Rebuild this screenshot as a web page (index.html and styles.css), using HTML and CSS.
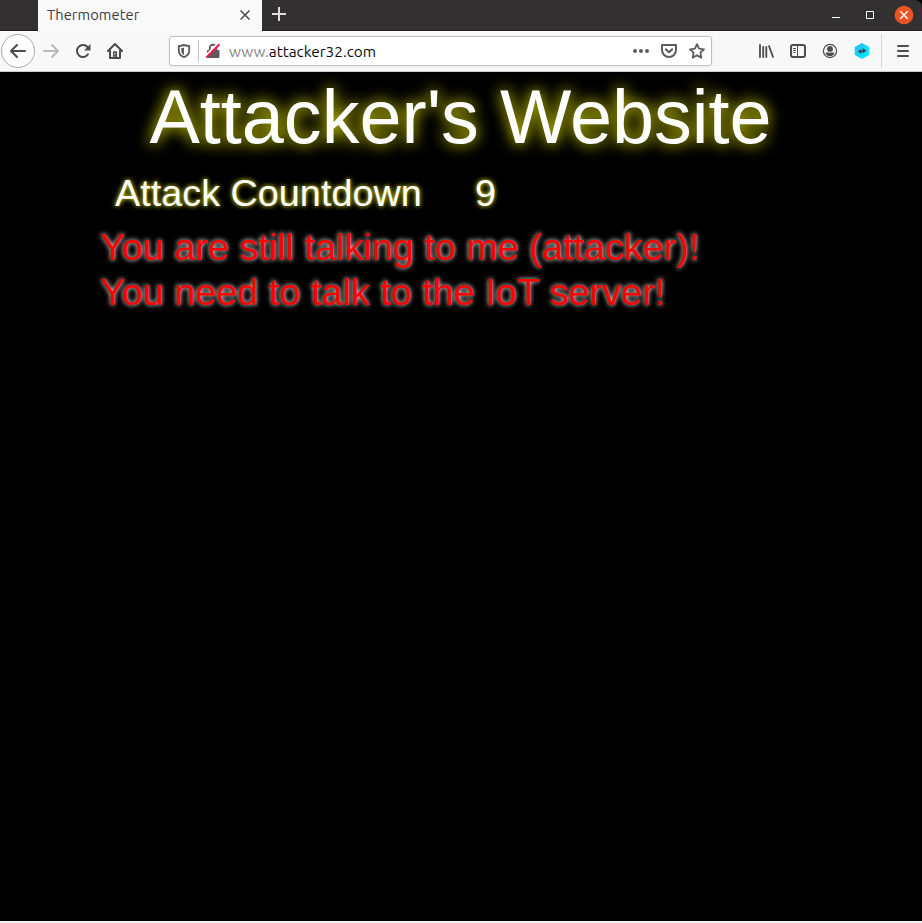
FILE: index.html
```html
<!DOCTYPE html>
<html lang="en">
<head>
<meta charset="utf-8">
<title>Thermometer</title>
<link rel="stylesheet" href="styles.css">
</head>
<body>
<div class="window">
  <header class="tabbar">
    <div class="tab">
      <span class="tab-title">Thermometer</span>
      <svg class="tab-close" width="16" height="16" viewBox="0 0 16 16"><path d="M3.500 3.500l9 9M12.500 3.500l-9 9" stroke="#4c4c4e" stroke-width="1.500"/></svg>
    </div>
    <svg class="new-tab" width="16" height="16" viewBox="0 0 16 16"><path d="M8 1v14M1 8h14" stroke="#dedede" stroke-width="2"/></svg>
    <div class="controls">
      <svg width="16" height="16" viewBox="0 0 16 16"><path d="M4 10.500h8" stroke="#fff"/></svg>
      <svg width="16" height="16" viewBox="0 0 16 16"><path d="M4.500 4.500h7v7h-7z" fill="none" stroke="#fff"/></svg>
      <svg width="20" height="20" viewBox="0 0 20 20"><circle cx="10" cy="10" r="9.300" fill="#e95420"/><path d="M6.300 6.300l7.400 7.400M13.700 6.300l-7.400 7.400" stroke="#fff" stroke-width="1.400"/></svg>
    </div>
  </header>
  <nav class="toolbar">
    <div class="nav-buttons">
      <span class="back"><svg width="16" height="16" viewBox="0 0 16 16" fill="none" stroke="#4c4c4e" stroke-width="2" stroke-linecap="round" stroke-linejoin="round"><path d="M15 8H1M7 2L1 8l6 6"/></svg></span>
      <svg width="16" height="16" viewBox="0 0 16 16" fill="none" stroke="#b9b9b9" stroke-width="2" stroke-linecap="round" stroke-linejoin="round"><path d="M1 8h14M9 2l6 6-6 6"/></svg>
      <svg width="16" height="16" viewBox="0 0 16 16"><path d="M12.500 4A6 6 0 1 0 13 11.300" fill="none" stroke="#4c4c4e" stroke-width="2" stroke-linecap="round"/><path d="M15.500 1v6.500H9z" fill="#4c4c4e"/></svg>
      <svg width="16" height="16" viewBox="0 0 16 16" fill="none" stroke="#4c4c4e" stroke-width="2" stroke-linecap="round" stroke-linejoin="round"><path d="M1 8l7-7 7 7M3 7.500V15h10V7.500"/><path d="M6.700 14.500V9h2.600v5.500M8.500 12v1" stroke-width="1.500"/></svg>
    </div>
    <div class="urlbar">
      <svg class="shield" width="16" height="16" viewBox="0 0 16 16"><path d="M8 2C5.800 2.800 4 3 2.800 3v4.500c0 3.500 2 5.500 5.200 6.700 3.200-1.200 5.200-3.200 5.200-6.700V3C12 3 10.200 2.800 8 2z" fill="none" stroke="#5d5d5f" stroke-width="1.900" stroke-linejoin="round"/><path d="M8 4.500C7 5 6 5 5.300 5v3c0 1.900 1 3 2.700 3.900z" fill="#5d5d5f"/></svg>
      <span class="url-divider"></span>
      <svg class="lock" width="16" height="16" viewBox="0 0 16 16"><path d="M4.700 7V5a3.300 3.300 0 0 1 6.600 0v2" fill="none" stroke="#5d5d5f" stroke-width="1.900"/><rect x="2" y="7" width="12.500" height="8" rx="1" fill="#5d5d5f"/><path d="M.7 13.500L13.300 1" stroke="#fff" stroke-width="3"/><path d="M1.200 14.600L14.500 1.300" stroke="#ff1048" stroke-width="2"/></svg>
      <span class="address"><span class="sub">www.</span><span class="host">attacker32.com</span></span>
      <div class="page-actions">
        <svg width="16" height="16" viewBox="0 0 16 16" fill="#5d5d5f"><circle cx="2" cy="8" r="2"/><circle cx="8" cy="8" r="2"/><circle cx="14" cy="8" r="2"/></svg>
        <svg width="16" height="16" viewBox="0 0 16 16" fill="none" stroke="#5d5d5f" stroke-width="2" stroke-linecap="round" stroke-linejoin="round"><path d="M1 2h14v5A7 7 0 0 1 1 7z"/><path d="M4.800 6.200L8 9.300l3.200-3.100"/></svg>
        <svg width="16" height="16" viewBox="0 0 16 16"><path d="M8 1.200l2.100 4.500 4.900.6-3.600 3.400.9 4.900L8 12.200l-4.300 2.400.9-4.900L1 6.300l4.900-.6z" fill="none" stroke="#5d5d5f" stroke-width="1.800" stroke-linejoin="round"/></svg>
      </div>
    </div>
    <div class="tools">
      <svg width="16" height="16" viewBox="0 0 16 16" fill="none" stroke="#4c4c4e" stroke-width="1.800" stroke-linecap="round"><path d="M2 2v12M5.200 4v10M8.300 4v10M11 3l4 11"/></svg>
      <svg width="16" height="16" viewBox="0 0 16 16"><rect x="1" y="2" width="14" height="12" rx="2" fill="none" stroke="#4c4c4e" stroke-width="2"/><path d="M7.500 2v12M3 5.500h3M3 7.500h3M3.500 9.500h2" stroke="#4c4c4e"/></svg>
      <svg width="16" height="16" viewBox="0 0 16 16"><circle cx="8" cy="8" r="6.600" fill="none" stroke="#4c4c4e" stroke-width="1.200"/><circle cx="8" cy="5.900" r="2.900" fill="#4c4c4e"/><path d="M3.500 9.500c1 .2 2 .2 2.500-.2 1 .7 3 .7 4 0 .5.400 1.500.4 2.500.2C12 12 10.300 13.200 8 13.200S4 12 3.500 9.500z" fill="#4c4c4e"/></svg>
      <svg width="16" height="16" viewBox="0 0 16 16"><defs><linearGradient id="hex" x1="0" y1="0" x2="1" y2="1"><stop offset="0" stop-color="#25b7ff"/><stop offset="1" stop-color="#00f4ff"/></linearGradient></defs><path d="M8 0l7.200 4v8L8 16 .8 12V4z" fill="url(#hex)"/><path d="M3.800 8.500L7.300 6v5zM8.700 5l3.700 2.800-3.700 2.400zM7 7.500h2v1.300H7z" fill="#404047"/></svg>
    </div>
    <div class="menu">
      <svg width="16" height="16" viewBox="0 0 16 16" stroke="#4c4c4e" stroke-width="2" stroke-linecap="round"><path d="M3 3h10M3 8h10M3 13h10"/></svg>
    </div>
  </nav>
  <main class="page">
    <h1 class="heading">Attacker's Website</h1>
    <div class="countdown"><span class="label">Attack Countdown</span><span>9</span></div>
    <p class="message">You are still talking to me (attacker)!<br>You need to talk to the IoT server!</p>
  </main>
</div>
</body>
</html>
```
FILE: styles.css
```css
* { box-sizing: border-box; }
body { margin: 0; background: #f0f0f0; }
svg { display: block; flex: none; }

.window {
  display: flex;
  flex-direction: column;
  height: 921px;
  overflow: hidden;
  background: #000;
  font-family: Ubuntu, "Noto Sans", sans-serif;
}

.tabbar {
  display: flex;
  align-items: center;
  flex: none;
  height: 31px;
  padding-left: 38px;
  background: #333031;
  border-bottom: 1px solid #232122;
  border-top-right-radius: 7px;
}
.tab {
  display: flex;
  justify-content: space-between;
  align-items: center;
  width: 224px;
  height: 31px;
  margin-bottom: -1px;
  padding: 0 9px 1px;
  background: #f9f9fa;
  color: #3c3c3e;
  font-size: 14.67px;
  letter-spacing: .07px;
}
.tab-title { line-height: 28px; padding-bottom: 1px; }
.new-tab { margin-left: 9px; margin-top: -2px; }
.controls {
  display: flex;
  align-items: center;
  gap: 18px;
  margin-left: auto;
  padding-right: 8px;
}
.controls svg:last-child { margin-left: -2px; }

.toolbar {
  display: flex;
  align-items: center;
  flex: none;
  height: 41px;
  background: #f8f8f8;
  border-bottom: 1px solid #ccc;
}
.nav-buttons {
  display: flex;
  align-items: center;
  gap: 16px;
  padding-left: 1px;
}
.back {
  display: flex;
  align-items: center;
  justify-content: center;
  width: 34px;
  height: 34px;
  margin-right: -8px;
  border: 1px solid #ababab;
  border-radius: 50%;
  background: #fff;
}
.urlbar {
  display: flex;
  align-items: center;
  width: 543px;
  height: 30px;
  margin-left: 46px;
  padding: 0 6px;
  border: 1px solid #c0c0c0;
  border-radius: 3px;
  background: #fff;
  box-shadow: 0 1px 4px rgba(0, 0, 0, .06);
}
.url-divider { width: 1px; height: 22px; margin: 0 6px; background: #c4c4c4; }
.address {
  margin-left: 8px;
  padding-top: 1px;
  font-size: 15.4px;
  line-height: 28px;
  white-space: nowrap;
}
.sub { color: #858587; }
.host { color: #0c0c0d; }
.page-actions { display: flex; gap: 12px; margin-left: auto; }
.tools { display: flex; gap: 16px; margin-left: 46px; }
.menu {
  display: flex;
  align-items: center;
  height: 34px;
  margin-left: 11px;
  padding-left: 13px;
  border-left: 1px solid #d7d7d8;
}

.page {
  flex: 1;
  background: #000;
  color: #fff;
  font-family: "Liberation Sans", Arial, sans-serif;
}
.heading {
  margin: 0;
  padding: 1px 1px 0 0;
  font-size: 75.6px;
  font-weight: 400;
  line-height: 88px;
  text-align: center;
  text-shadow: 0 0 15px #ff0;
}
.countdown {
  display: flex;
  padding: 10px 0 0 115px;
  font-size: 37.8px;
  line-height: 44px;
  text-shadow: 0 0 5px #ff0;
}
.label { width: 360px; }
.message {
  margin: 0;
  padding: 10px 0 0 100px;
  color: #f00;
  font-size: 37.8px;
  line-height: 45px;
  text-shadow: 0 0 5px #fff;
}
```
